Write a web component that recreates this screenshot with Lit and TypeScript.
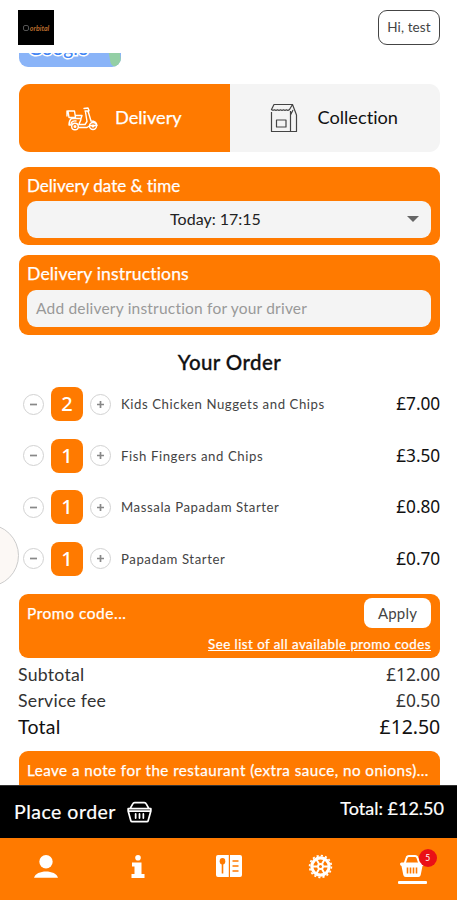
import { LitElement, html, css } from "lit";
import { customElement } from "lit/decorators.js";

const scooter = html`<svg class="scooter" viewBox="0 0 32 24" width="32" height="24" fill="none" stroke="currentColor" stroke-width="1.400" stroke-linejoin="round" stroke-linecap="round">
  <path d="M2 4h6.500l1 6.500H3z M1 4v5 M10 8.500h6l-1 3H5.500C3.500 13 3 15.500 3 18h2 M15 11.500c0 3-2 4-2 6h6l2-3L19.500 5 M19 4h3l3 10c3 0 5.500 1.500 6 4.500h-7l-3 2h-8 M18 1.500l4-.5 1 2.500-1 1.500 M10 14c-3-.5-5 1-5 3.500"/>
  <circle cx="9" cy="19.500" r="3.300"/><circle cx="9" cy="19.500" r=".8"/>
  <circle cx="27" cy="19" r="3.500"/><circle cx="27" cy="19" r=".8"/>
</svg>`;

const bag = html`<svg class="bag" viewBox="0 0 28 30" width="28" height="30" fill="none" stroke="currentColor" stroke-width="1.200" stroke-linejoin="round">
  <path d="M4 1.500h18.500l-3 5q-1.500 1.500-3 .3-1.500 1.200-3 0-1.500 1.200-3 0-1.500 1.200-3 0-1.500 1.200-3 0-1.500 1-3-.3z M1.500 9v19.500h25V12L22.500 1.500 M20.500 8v20.500 M20.500 12l2.500-5"/>
  <path d="M6.500 17h9.500v7H6.500z"/>
</svg>`;

const basketLine = html`<svg viewBox="0 0 26 22" width="25" height="22" fill="none" stroke="currentColor" stroke-width="1.800" stroke-linejoin="round" stroke-linecap="round">
  <path d="M3.500 7 6 2.500Q6.600 1.200 8 1.200h10Q19.400 1.200 20 2.500L22.500 7 M1.200 7.500h23.600v2.500L22 20q-.3 1-1.300 1H5.300q-1 0-1.300-1L1.200 10z M2 10h22 M9 13v4.300M13 13v4.300M17 13v4.300"/>
</svg>`;

const user = html`<svg viewBox="0 0 24 23" width="24" height="23" fill="currentColor">
  <circle cx="12" cy="6.800" r="6.700"/><path d="M0 22.800c2-8.500 22-8.500 24 0z"/>
</svg>`;

const info = html`<svg viewBox="0 0 14 23" width="14" height="23" fill="currentColor">
  <circle cx="7" cy="2.800" r="2.800"/><path d="M1 7.500h9.500v11.500H13.500V23H.5V19h3V11.500H1z"/>
</svg>`;

const menu = html`<svg viewBox="0 0 26 22" width="26" height="22">
  <path fill="currentColor" d="M2 0h10.800v22H2q-2 0-2-2V2q0-2 2-2zM14 0h10q2 0 2 2v18q0 2-2 2H14z"/>
  <ellipse class="ink-fill" cx="6.500" cy="6.200" rx="2.800" ry="3.300"/>
  <path class="ink-line" d="M6.500 8v10.500M16.500 6h6M16.500 11h6M16.500 16h6"/>
</svg>`;

const gear = html`<svg viewBox="0 0 26 26" width="25" height="25" fill="none" stroke="currentColor">
  <circle cx="13" cy="13" r="11.300" stroke-width="1.800" stroke-dasharray="2.200 2.237"/>
  <circle cx="13" cy="13" r="9" stroke-width="3.200"/>
  <circle cx="13" cy="13" r="2.600" stroke-width="2"/>
  <path stroke-width="2" d="M16 13h6M14.500 15.600l3 5.200M11.500 15.600l-3 5.200M10 13H4M11.500 10.400l-3-5.200M14.500 10.400l3-5.200"/>
</svg>`;

const basket = html`<svg viewBox="0 0 24 22" width="24" height="22">
  <path fill="none" stroke="currentColor" stroke-width="2" d="M4.500 9 6.500 3Q7 1 9 1h6q2 0 2.500 2l2 6"/>
  <path fill="currentColor" d="M1.500 7.500h21q1.500 0 1.500 1.500T22.500 11L20.700 20q-.4 2-2.400 2H5.700q-2 0-2.400-2L1.500 11Q0 10.500 0 9T1.500 7.500z"/>
  <path class="ink-line" d="M7.500 12.500v6M10.500 12.500v6M13.500 12.500v6M16.500 12.500v6"/>
</svg>`;

@customElement("order-line")
class OrderLine extends LitElement {
  static properties = { qty: { type: Number }, name: {}, price: {} };
  declare qty: number;
  declare name: string;
  declare price: string;
  static styles = css`
    :host { display: flex; align-items: center; height: 51.500px; padding-left: 4px; color: #111; }
    .step { box-sizing: border-box; width: 21px; height: 21px; border: 1px solid #d2d2d2; border-radius: 50%; display: grid; place-items: center; }
    .step svg { stroke: #888; stroke-width: 1.700; }
    .qty { width: 32px; height: 34px; margin: 0 7px; border-radius: 8px; background: #ff7a00; color: #fff; font: 500 20px/33px "Noto Sans", sans-serif; text-align: center; }
    .name { margin-left: 10px; font-size: 13.200px; letter-spacing: 0.570px; color: #444; flex: 1; white-space: nowrap; }
    .price { font: 17.300px/24px "Noto Sans", sans-serif; letter-spacing: -0.100px; }
  `;
  render() {
    return html`<span class="step"><svg width="7" height="7"><path d="M0 3.500h7" /></svg></span>
      <span class="qty">${this.qty}</span>
      <span class="step"><svg width="7" height="7"><path d="M0 3.500h7M3.500 0v7" /></svg></span>
      <span class="name">${this.name}</span><span class="price">${this.price}</span>`;
  }
}

@customElement("app-root")
class AppRoot extends LitElement {
  static styles = css`
    :host { display: flex; flex-direction: column; position: relative; width: 457px; height: 900px; overflow: hidden; background: #fff; color: #111; font-family: Lato, "Noto Sans", sans-serif; font-variant-ligatures: none; }
    * { box-sizing: border-box; }
    header { height: 53px; flex: none; padding: 10px 17px 0 18px; display: flex; justify-content: space-between; }
    .logo { width: 36px; height: 35px; background: #000; color: #b86b2c; font-size: 7px; font-style: italic; font-weight: 700; display: flex; align-items: center; justify-content: center; gap: 1px; }
    .logo i { width: 6px; height: 6px; border: 1px solid #555; border-radius: 2px; }
    .hello { height: 35px; width: 62px; border: 1px solid #444; border-radius: 9px; font-size: 13.500px; letter-spacing: .1px; color: #444; display: grid; place-items: center; padding-bottom: 1px; }
    main { flex: 1; min-height: 0; overflow: hidden; padding: 0 17px 0 19px; }
    .map { width: 102px; height: 14px; border-radius: 0 0 9px 9px; overflow: hidden; background: #8ab4f8; display: flex; justify-content: space-between; }
    .map b { margin: -14px 0 0 9px; font: 500 19px/18px Lato, sans-serif; color: #4285f4; -webkit-text-stroke: 3px #fff; paint-order: stroke fill; }
    .map i { width: 11px; height: 14px; background: #93cfa5; border-radius: 0 0 0 5px; transform: skewX(10deg); }
    .tabs { display: flex; height: 68px; margin-top: 17px; border-radius: 11px; overflow: hidden; background: #f4f4f4; font-size: 18.200px; }
    .tab { display: flex; align-items: center; flex: 1; }
    .tab span { padding-bottom: 2px; }
    .tab.on { background: #ff7a00; color: #fff; -webkit-text-stroke: .25px; }
    .scooter { margin: 2px 17px 0 47px; }
    .bag { margin: 0 20px 0 40px; color: #444; }
    .card { margin-top: 10px; height: 80px; border-radius: 9px; background: #ff7a00; color: #fff; padding: 8px 9px 0 8px; font-size: 17px; line-height: 22px; white-space: nowrap; }
    .label, .promo .row > :first-child, .note, .link { -webkit-text-stroke: .25px; }
    .card.date { height: 78px; margin-top: 15px; }
    .instr .label { font-size: 17.600px; letter-spacing: .13px; }
    .field { margin-top: 4px; height: 37px; border-radius: 9px; background: #f4f4f4; color: #222; display: flex; align-items: center; padding: 0 10px 2px; font-size: 16px; }
    .instr .field { margin-top: 5px; color: #999; font-size: 15.500px; letter-spacing: .2px; padding-left: 9px; }
    .pick { flex: 1; text-align: center; padding-right: 4px; margin-left: -9px; }
    .arrow { border: 6px solid transparent; border-top: 6px solid #666; border-bottom: 0; margin-right: 2px; }
    h1 { margin: 16px 0 0; font-size: 20.500px; line-height: 22px; font-weight: 500; text-align: center; letter-spacing: .4px; -webkit-text-stroke: .3px; }
    .lines { padding-top: 5.500px; }
    .promo { height: 64px; margin-top: 9px; padding: 4px 9px 0 8px; }
    .row { display: flex; justify-content: space-between; }
    .promo .row { font-size: 15.500px; line-height: 30px; letter-spacing: .53px; }
    .promo .apply { width: 67px; height: 30px; border-radius: 8px; background: #fff; color: #444; text-align: center; font-size: 15px; letter-spacing: .2px; }
    .link { text-align: right; text-decoration: underline; font-size: 13.300px; line-height: 16px; margin-top: 8px; letter-spacing: .47px; }
    .sums { margin: 4px 0 0 -1px; font-size: 17.700px; letter-spacing: .25px; line-height: 26px; color: #333; }
    .sums .row > :last-child { font: 17.400px/25px "Noto Sans", sans-serif; letter-spacing: -.1px; }
    .sums .total { font-size: 19.500px; line-height: 26px; color: #111; }
    .sums .total > :last-child { font-size: 19.500px; line-height: 26px; }
    .note { margin-top: 11px; height: 60px; font-size: 15.200px; letter-spacing: .46px; }
    .pay { height: 53px; flex: none; background: #000; border-top: 1px solid #333; color: #fff; padding: 0 13px 0 14px; display: flex; align-items: center; font-size: 19.500px; letter-spacing: .5px; -webkit-text-stroke: .2px; }
    .pay > :first-child { padding-bottom: 2px; }
    .pay svg { margin-left: 11px; }
    .pay .sum { margin-left: auto; font-size: 18px; letter-spacing: 0; padding-bottom: 9px; }
    nav { height: 62px; flex: none; background: #ff7a00; color: #fff; display: grid; grid-template-columns: repeat(5, 1fr); }
    .item { display: flex; justify-content: center; align-items: center; padding: 0 0 6px 1px; position: relative; }
    .item.on::after { content: ""; position: absolute; top: 43px; left: 32px; width: 29px; height: 3px; border-radius: 1px; background: #fff; }
    .badge { position: absolute; left: 53px; top: 11px; width: 18px; height: 18px; border-radius: 50%; background: #ea1016; font-size: 8.500px; display: grid; place-items: center; }
    .ink-fill { fill: #ff7a00; }
    .ink-line { stroke: #ff7a00; stroke-width: 1.600; fill: none; }
    .bubble { position: absolute; left: -44px; top: 524px; width: 63px; height: 63px; border-radius: 50%; background: #fcf8f5; border: 1px solid #ccc; }
  `;
  private lines = [
    { qty: 2, name: "Kids Chicken Nuggets and Chips", price: "£7.00" },
    { qty: 1, name: "Fish Fingers and Chips", price: "£3.50" },
    { qty: 1, name: "Massala Papadam Starter", price: "£0.80" },
    { qty: 1, name: "Papadam Starter", price: "£0.70" },
  ];
  render() {
    return html`
      <header><div class="logo"><i></i>orbital</div><div class="hello">Hi, test</div></header>
      <main>
        <div class="map"><b>Google</b><i></i></div>
        <div class="tabs"><div class="tab on">${scooter}<span>Delivery</span></div><div class="tab">${bag}<span>Collection</span></div></div>
        <section class="card date"><div class="label">Delivery date &amp; time</div><div class="field"><span class="pick">Today: 17:15</span><span class="arrow"></span></div></section>
        <section class="card instr"><div class="label">Delivery instructions</div><div class="field">Add delivery instruction for your driver</div></section>
        <h1>Your Order</h1>
        <div class="lines">${this.lines.map((l) => html`<order-line .qty=${l.qty} .name=${l.name} .price=${l.price}></order-line>`)}</div>
        <section class="card promo"><div class="row"><span>Promo code...</span><span class="apply">Apply</span></div><div class="link">See list of all available promo codes</div></section>
        <div class="sums">
          <div class="row"><span>Subtotal</span><span>£12.00</span></div>
          <div class="row"><span>Service fee</span><span>£0.50</span></div>
          <div class="row total"><span>Total</span><span>£12.50</span></div>
        </div>
        <section class="card note">Leave a note for the restaurant (extra sauce, no onions)...</section>
      </main>
      <div class="pay"><span>Place order</span>${basketLine}<span class="sum">Total: £12.50</span></div>
      <nav>
        <div class="item">${user}</div><div class="item">${info}</div><div class="item">${menu}</div><div class="item">${gear}</div>
        <div class="item on">${basket}<span class="badge">5</span></div>
      </nav>
      <div class="bubble"></div>`;
  }
}
